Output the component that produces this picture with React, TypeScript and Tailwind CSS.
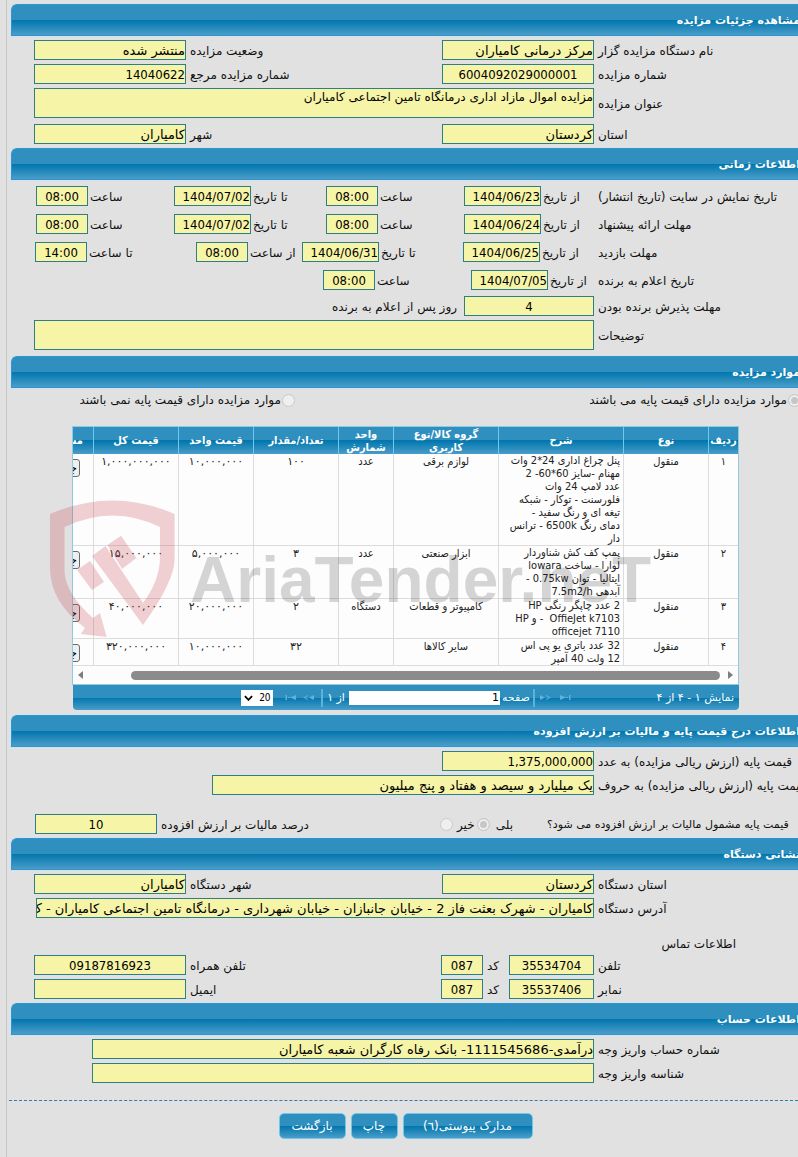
import { useId } from "react";
import type { ReactNode } from "react";

const fieldBase =
  "h-5 min-w-0 shrink-0 rounded-none border border-[#2c7f86] bg-[#f6f4a6] px-0 text-[13px] leading-4 text-black outline-none";
const wideFace = "font-['DejaVu_Sans',sans-serif]";
const narrowFace = "font-['DejaVu_Sans_Condensed','DejaVu_Sans',sans-serif]";

const barFill =
  "bg-[linear-gradient(to_bottom,#2f8fbf_0%,#2f8fbf_50%,#0076ad_50%,#4a9dc9_100%)]";

function SectionBar({ title }: { title: string }) {
  return (
    <h2
      className={`flex h-8 items-center overflow-hidden rounded-tl-md border border-r-0 border-[#3593cb] pt-px text-[11px] font-bold text-white shadow-[0_0_0_1px_#cfe4f2] ${barFill}`}
    >
      <span className="-mr-[2px] whitespace-nowrap">{title}</span>
    </h2>
  );
}

type FieldProps = {
  label: string;
  value: string;
  labelClass: string;
  fieldClass: string;
};

function Field({ label, value, labelClass, fieldClass }: FieldProps) {
  const id = useId();
  const face = /[آ-ی]/.test(value) ? wideFace : narrowFace;
  return (
    <>
      <label htmlFor={id} className={`shrink-0 whitespace-nowrap pt-[2px] text-left ${labelClass}`}>
        {label}
      </label>
      <input id={id} readOnly value={value} className={`${fieldBase} ${face} ${fieldClass}`} />
    </>
  );
}

function AreaField({ label, value }: { label: string; value: string }) {
  const id = useId();
  return (
    <div className="flex items-center pl-[23px]">
      <label htmlFor={id} className="w-[204px] shrink-0 whitespace-nowrap pt-[2px] pl-1 text-left">
        {label}
      </label>
      <textarea
        id={id}
        readOnly
        value={value}
        className="block h-[30px] min-w-0 flex-1 resize-none overflow-hidden rounded-none border border-[#2c7f86] bg-[#f6f4a6] px-0 text-[12px] leading-4 text-black outline-none"
      />
    </div>
  );
}

function Row({ children, pad = "pl-[23px]" }: { children: ReactNode; pad?: string }) {
  return <div className={`flex items-center ${pad}`}>{children}</div>;
}

const MAIN = "w-[204px] pl-1";
const radioClass =
  "m-0 size-[13px] shrink-0 appearance-none rounded-full border border-[#c9c9c9] bg-[#efefef] checked:bg-[#c6c6c6] checked:shadow-[inset_0_0_0_2px_#efefef]";

type Item = {
  n: string;
  kind: string;
  desc: string[];
  group: string;
  unit: string;
  qty: string;
  price: string;
  total: string;
};

const items: Item[] = [
  {
    n: "۱",
    kind: "منقول",
    desc: [
      "پنل چراغ اداری 24*2 وات",
      "مهنام -سایز 60*60- 2",
      "عدد لامپ 24 وات",
      "فلورسنت - توکار - شبکه",
      "تیغه ای و رنگ سفید -",
      "دمای رنگ 6500k - ترانس",
      "دار",
    ],
    group: "لوازم برقی",
    unit: "عدد",
    qty: "۱۰۰",
    price: "۱۰,۰۰۰,۰۰۰",
    total: "۱,۰۰۰,۰۰۰,۰۰۰",
  },
  {
    n: "۲",
    kind: "منقول",
    desc: ["پمپ کف کش شناوردار", "لوارا - ساخت lowara", "ایتالیا - توان 0.75kw -", "آبدهی 7.5m2/h"],
    group: "ابزار صنعتی",
    unit: "عدد",
    qty: "۳",
    price: "۵,۰۰۰,۰۰۰",
    total: "۱۵,۰۰۰,۰۰۰",
  },
  {
    n: "۳",
    kind: "منقول",
    desc: ["2 عدد چاپگر رنگی HP", "OffieJet k7103  - و HP", "officejet 7110"],
    group: "کامپیوتر و قطعات",
    unit: "دستگاه",
    qty: "۲",
    price: "۲۰,۰۰۰,۰۰۰",
    total: "۴۰,۰۰۰,۰۰۰",
  },
  {
    n: "۴",
    kind: "منقول",
    desc: ["32 عدد باتری یو پی اس", "12 ولت 40 آمپر"],
    group: "سایر کالاها",
    unit: "",
    qty: "۳۲",
    price: "۱۰,۰۰۰,۰۰۰",
    total: "۳۲۰,۰۰۰,۰۰۰",
  },
];

const th = "border-l border-[#6fc9ee] p-0 text-center align-middle font-bold leading-[13px]";
const td = "border-b border-l border-[#dcdcdc] px-[2px] pt-px pb-0 text-center align-top leading-[13px]";

function ItemsTable() {
  return (
    <div className={`overflow-hidden border border-[#8fc9e2] bg-[#fdfdfd] ${narrowFace}`}>
      <div className="overflow-hidden">
        <table className="w-[730px] table-fixed border-separate border-spacing-0 text-[11px]">
          <colgroup>
            <col className="w-[30px]" />
            <col className="w-[85px]" />
            <col className="w-[125px]" />
            <col className="w-[105px]" />
            <col className="w-[55px]" />
            <col className="w-[85px]" />
            <col className="w-[75px]" />
            <col className="w-[85px]" />
            <col className="w-[85px]" />
          </colgroup>
          <thead>
            <tr className={`h-[27px] text-white ${barFill}`}>
              <th className={th}>ردیف</th>
              <th className={th}>نوع</th>
              <th className={th}>شرح</th>
              <th className={th}>
                گروه کالا/نوع
                <br />
                کاربری
              </th>
              <th className={th}>
                واحد
                <br />
                شمارش
              </th>
              <th className={th}>تعداد/مقدار</th>
              <th className={th}>قیمت واحد</th>
              <th className={th}>قیمت کل</th>
              <th className="p-0 pr-[10px] text-right font-bold">مشاهده</th>
            </tr>
          </thead>
          <tbody className="text-[#222]">
            {items.map((it) => (
              <tr key={it.n}>
                <td className={td}>{it.n}</td>
                <td className={td}>{it.kind}</td>
                <td className="whitespace-pre border-b border-l border-[#dcdcdc] p-0 pr-[3px] text-right align-top leading-[13px]">
                  {it.desc.map((line) => (
                    <div key={line} className="h-[13px]">
                      {line}
                    </div>
                  ))}
                </td>
                <td className={td}>{it.group}</td>
                <td className={td}>{it.unit}</td>
                <td className={`${td} ${wideFace}`}>{it.qty}</td>
                <td className={`${td} ${wideFace}`}>{it.price}</td>
                <td className={`${td} ${wideFace}`}>{it.total}</td>
                <td className="border-b border-[#dcdcdc] p-0 pr-[13px] pt-[5px] text-right align-top">
                  <button
                    type="button"
                    className="block h-[18px] rounded-[3px] border border-[#6b6b6b] bg-[#efefef] px-[2px] text-[12px] leading-4 text-black"
                  >
                    جزئیات
                  </button>
                </td>
              </tr>
            ))}
          </tbody>
        </table>
      </div>
      <div className="flex h-[18px] items-center justify-between bg-[#fcfcfc] px-[5px]">
        <svg viewBox="0 0 5 8" className="h-2 w-[5px]" aria-hidden="true">
          <path d="M0 0L5 4L0 8Z" fill="#7d7d7d" />
        </svg>
        <div className="mr-2 ml-[48px] h-[9px] flex-1 rounded-full bg-[#8b8b8b]" />
        <svg viewBox="0 0 5 8" className="h-2 w-[5px]" aria-hidden="true">
          <path d="M5 0L0 4L5 8Z" fill="#7d7d7d" />
        </svg>
      </div>
    </div>
  );
}

function PagerIcon({ d }: { d: string }) {
  return (
    <svg viewBox="0 0 11 7" className="h-[7px] w-[11px]" aria-hidden="true">
      <path d={d} fill="#5fb2dc" />
    </svg>
  );
}

function Pager() {
  return (
    <div className={`ml-px flex h-[25px] items-center rounded-b-[4px] px-[5px] text-[11px] text-white ${barFill}`}>
      <div className="flex-1 whitespace-nowrap">نمایش ۱ - ۴ از ۴</div>
      <button type="button" aria-label="صفحه آخر" className="ml-[9px]">
        <PagerIcon d="M0 1L6 3.500L0 6ZM6 3H8V4H6ZM9 1H10.500V6H9Z" />
      </button>
      <button type="button" aria-label="صفحه بعد" className="ml-[5px]">
        <PagerIcon d="M0 1L5 3.500L0 6ZM6 1L11 3.500L6 6V5L9 3.500L6 2Z" />
      </button>
      <div className="ml-[3px] h-[18px] w-[2px] bg-[#5cb4dd]" />
      <label htmlFor="page-no" className="ml-[2px]">
        صفحه
      </label>
      <input
        id="page-no"
        readOnly
        value="1"
        dir="ltr"
        className="h-[14px] w-[151px] bg-white px-px text-right text-[11px] text-black outline-none"
      />
      <span className="mr-1 whitespace-nowrap">از ۱</span>
      <div className="mr-1 h-[18px] w-[2px] bg-[#5cb4dd]" />
      <button type="button" aria-label="صفحه قبل" className="mr-[7px]">
        <PagerIcon d="M11 1L6 3.500L11 6ZM5 1L0 3.500L5 6V5L2 3.500L5 2Z" />
      </button>
      <button type="button" aria-label="صفحه اول" className="mr-[7px]">
        <PagerIcon d="M11 1L5 3.500L11 6ZM5 3H3V4H5ZM2 1H0.500V6H2Z" />
      </button>
      <div className="relative mr-3 flex">
        <select
          dir="ltr"
          aria-label="تعداد در صفحه"
          className={`h-4 w-8 appearance-none bg-white pl-[18px] text-[10px] text-black outline-none ${narrowFace}`}
        >
          <option>20</option>
        </select>
        <svg viewBox="0 0 10 6" className="absolute top-[5px] left-[3px] h-[6px] w-[9px]" aria-hidden="true">
          <path d="M1 1L5 5L9 1" fill="none" stroke="#000" strokeWidth="2" />
        </svg>
      </div>
      <div className="flex-1" />
    </div>
  );
}

function Watermark() {
  return (
    <svg
      viewBox="40 485 630 165"
      className="pointer-events-none absolute top-[485px] left-[40px] h-[165px] w-[630px]"
      aria-hidden="true"
    >
      <g fill="#c83746" fillOpacity="0.23">
        <path d="M50 514Q113 487 174.600 514V560Q174 582 143 625L92 556L105.500 546L143 603Q160 580 160 557V527Q113 504 64.500 527V572Q66 594 93 618L100 613L106.700 637L80.700 634L85 628Q50 602 50 568Z" />
        <path d="M107.500 545L121 535.700L136.400 558L122 569Z" />
        <path d="M77 570L90 561L104 582L92 590Z" />
      </g>
      <text
        x="190"
        y="602"
        direction="ltr"
        fill="#000"
        fillOpacity="0.16"
        className="font-['Liberation_Sans',sans-serif] text-[64px] font-bold"
      >
        AriaTender.neT
      </text>
    </svg>
  );
}

function ActionButton({ children, width }: { children: ReactNode; width: string }) {
  return (
    <button
      type="button"
      className={`h-[26px] rounded-[5px] border border-[#6fc8ea] text-[12px] text-white ${barFill} ${width}`}
    >
      {children}
    </button>
  );
}

export default function App() {
  return (
    <div
      dir="rtl"
      className="relative min-h-screen overflow-hidden bg-[#e1e1e1] font-['DejaVu_Sans',sans-serif] text-[12px] leading-4 text-[#111]"
    >
      <main className="ml-[6px] min-h-screen border-l border-[#c6c6c6] pt-1 pl-1">
        <SectionBar title="مشاهده جزئیات مزایده" />
        <section className="flex flex-col gap-1 py-1">
          <Row>
            <Field label="نام دستگاه مزایده گزار" value="مرکز درمانی کامیاران" labelClass={MAIN} fieldClass="w-[152px]" />
            <Field label="وضعیت مزایده" value="منتشر شده" labelClass="flex-1 pl-1" fieldClass="w-[152px]" />
          </Row>
          <Row>
            <Field label="شماره مزایده" value="6004092029000001" labelClass={MAIN} fieldClass="w-[152px] text-center" />
            <Field label="شماره مزایده مرجع" value="14040622" labelClass="flex-1 pl-1" fieldClass="w-[152px]" />
          </Row>
          <AreaField label="عنوان مزایده" value="مزایده اموال مازاد اداری درمانگاه تامین اجتماعی کامیاران" />
          <div className="pt-[2px]">
            <Row>
              <Field label="استان" value="کردستان" labelClass={MAIN} fieldClass="w-[152px]" />
              <Field label="شهر" value="کامیاران" labelClass="flex-1 pl-1" fieldClass="w-[152px]" />
            </Row>
          </div>
        </section>

        <SectionBar title="اطلاعات زمانی" />
        <section className="pt-[6px] pb-[6px]">
          <div className="flex flex-col gap-2">
            <Row pad="pl-[25px]">
              <span className={`shrink-0 pt-[2px] text-left ${MAIN}`}>تاریخ نمایش در سایت (تاریخ انتشار)</span>
              <Field label="از تاریخ" value="1404/06/23" labelClass="w-[53px] pl-[2px]" fieldClass="w-[77px]" />
              <Field label="ساعت" value="08:00" labelClass="w-[86px] pl-[2px]" fieldClass="w-[52px] text-center" />
              <Field label="تا تاریخ" value="1404/07/02" labelClass="w-[75px] pl-[2px]" fieldClass="w-[77px]" />
              <Field label="ساعت" value="08:00" labelClass="flex-1 pl-[2px]" fieldClass="w-[52px] text-center" />
            </Row>
            <Row pad="pl-[25px]">
              <span className={`shrink-0 pt-[2px] text-left ${MAIN}`}>مهلت ارائه پیشنهاد</span>
              <Field label="از تاریخ" value="1404/06/24" labelClass="w-[53px] pl-[2px]" fieldClass="w-[77px]" />
              <Field label="ساعت" value="08:00" labelClass="w-[86px] pl-[2px]" fieldClass="w-[52px] text-center" />
              <Field label="تا تاریخ" value="1404/07/02" labelClass="w-[75px] pl-[2px]" fieldClass="w-[77px]" />
              <Field label="ساعت" value="08:00" labelClass="flex-1 pl-[2px]" fieldClass="w-[52px] text-center" />
            </Row>
            <Row pad="pl-[24px]">
              <span className={`shrink-0 pt-[2px] text-left ${MAIN}`}>مهلت بازدید</span>
              <Field label="از تاریخ" value="1404/06/25" labelClass="w-[54px] pl-[2px]" fieldClass="w-[77px]" />
              <Field label="تا تاریخ" value="1404/06/31" labelClass="w-[84px] pl-[2px]" fieldClass="w-[77px]" />
              <Field label="از ساعت" value="08:00" labelClass="w-[54px] pl-[2px]" fieldClass="w-[52px] text-center" />
              <Field label="تا ساعت" value="14:00" labelClass="flex-1 pl-[2px]" fieldClass="w-[52px] text-center" />
            </Row>
            <Row>
              <span className={`shrink-0 pt-[2px] text-left ${MAIN}`}>تاریخ اعلام به برنده</span>
              <Field label="از تاریخ" value="1404/07/05" labelClass="w-[46px] pl-[2px]" fieldClass="w-[77px]" />
              <Field label="ساعت" value="08:00" labelClass="w-[96px] pl-[2px]" fieldClass="w-[52px] text-center" />
            </Row>
          </div>
          <div className="flex flex-col gap-1 pt-[6px]">
            <Row>
              <Field label="مهلت پذیرش برنده بودن" value="4" labelClass={MAIN} fieldClass="w-[130px] text-center" />
              <span className="pt-[2px] pr-[7px]">روز پس از اعلام به برنده</span>
            </Row>
            <AreaField label="توضیحات" value="" />
          </div>
        </section>

        <SectionBar title="موارد مزایده" />
        <section className="pb-[5px]">
          <div className="flex h-[38px] items-start pt-1">
            <label className="-mr-[3px] flex w-[506px] items-center gap-px">
              <input type="radio" name="base" disabled defaultChecked className={radioClass} />
              <span>موارد مزایده دارای قیمت پایه می باشند</span>
            </label>
            <label className="flex items-center gap-px">
              <input type="radio" name="base" disabled className={radioClass} />
              <span>موارد مزایده دارای قیمت پایه نمی باشند</span>
            </label>
          </div>
          <div className="mr-[59px] ml-[61px]">
            <ItemsTable />
            <Pager />
          </div>
        </section>

        <SectionBar title="اطلاعات درج قیمت پایه و مالیات بر ارزش افزوده" />
        <section className="flex flex-col gap-1 py-1">
          <Row>
            <Field label="قیمت پایه (ارزش ریالی مزایده) به عدد" value="1,375,000,000" labelClass={MAIN} fieldClass="w-[152px]" />
          </Row>
          <Row>
            <Field
              label="قیمت پایه (ارزش ریالی مزایده) به حروف"
              value="یک میلیارد و سیصد و هفتاد و پنج میلیون"
              labelClass="-mr-2 w-[212px] pl-1"
              fieldClass="w-[382px]"
            />
          </Row>
          <div className="flex items-center pt-[15px] pl-[24px]">
            <span className="w-[251px] shrink-0 whitespace-nowrap pt-[2px] text-left text-[11px]">
              قیمت پایه مشمول مالیات بر ارزش افزوده می شود؟
            </span>
            <label className="mr-[34px] flex items-center gap-[6px]">
              <span className="pt-[2px]">بلی</span>
              <input type="radio" name="vat" disabled defaultChecked className={radioClass} />
            </label>
            <label className="mr-[2px] flex items-center gap-1">
              <span className="pt-[2px]">خیر</span>
              <input type="radio" name="vat" disabled className={radioClass} />
            </label>
            <Field label="درصد مالیات بر ارزش افزوده" value="10" labelClass="flex-1 pl-1" fieldClass="w-[122px] text-center" />
          </div>
        </section>

        <SectionBar title="نشانی دستگاه" />
        <section className="flex flex-col gap-1 py-1">
          <Row>
            <Field label="استان دستگاه" value="کردستان" labelClass={MAIN} fieldClass="w-[152px]" />
            <Field label="شهر دستگاه" value="کامیاران" labelClass="flex-1 pl-1" fieldClass="w-[152px]" />
          </Row>
          <Row pad="pl-[25px]">
            <Field
              label="آدرس دستگاه"
              value="کامیاران - شهرک بعثت فاز 2 - خیابان جانبازان - خیابان شهرداری - درمانگاه تامین اجتماعی کامیاران - ک"
              labelClass={MAIN}
              fieldClass="flex-1"
            />
          </Row>
          <h3 className="pt-[15px] pr-[62px] leading-[14px]">اطلاعات تماس</h3>
          <Row>
            <Field label="تلفن" value="35534704" labelClass={MAIN} fieldClass="w-[85px] text-center" />
            <Field label="کد" value="087" labelClass="w-[26px] pl-1" fieldClass="w-[42px] text-center" />
            <Field label="تلفن همراه" value="09187816923" labelClass="flex-1 pl-1" fieldClass="w-[152px] text-center" />
          </Row>
          <Row>
            <Field label="نمابر" value="35537406" labelClass={MAIN} fieldClass="w-[85px] text-center" />
            <Field label="کد" value="087" labelClass="w-[26px] pl-1" fieldClass="w-[42px] text-center" />
            <Field label="ایمیل" value="" labelClass="flex-1 pl-1" fieldClass="w-[152px]" />
          </Row>
        </section>

        <SectionBar title="اطلاعات حساب" />
        <section className="flex flex-col gap-1 py-1">
          <Row pad="pl-[81px]">
            <Field label="شماره حساب واریز وجه" value="درآمدی-1111545686- بانک رفاه کارگران شعبه کامیاران" labelClass={MAIN} fieldClass="flex-1" />
          </Row>
          <Row pad="pl-[81px]">
            <Field label="شناسه واریز وجه" value="" labelClass={MAIN} fieldClass="flex-1" />
          </Row>
        </section>

        <div className="mt-[13px] -ml-[2px] border-t border-dashed border-[#2c7fa8]" />
        <div className="flex justify-center gap-[5px] pt-3 pl-[2px]">
          <ActionButton width="w-[130px]">مدارک پیوستی(٦)</ActionButton>
          <ActionButton width="w-[47px]">چاپ</ActionButton>
          <ActionButton width="w-[67px]">بازگشت</ActionButton>
        </div>
      </main>
      <Watermark />
    </div>
  );
}
